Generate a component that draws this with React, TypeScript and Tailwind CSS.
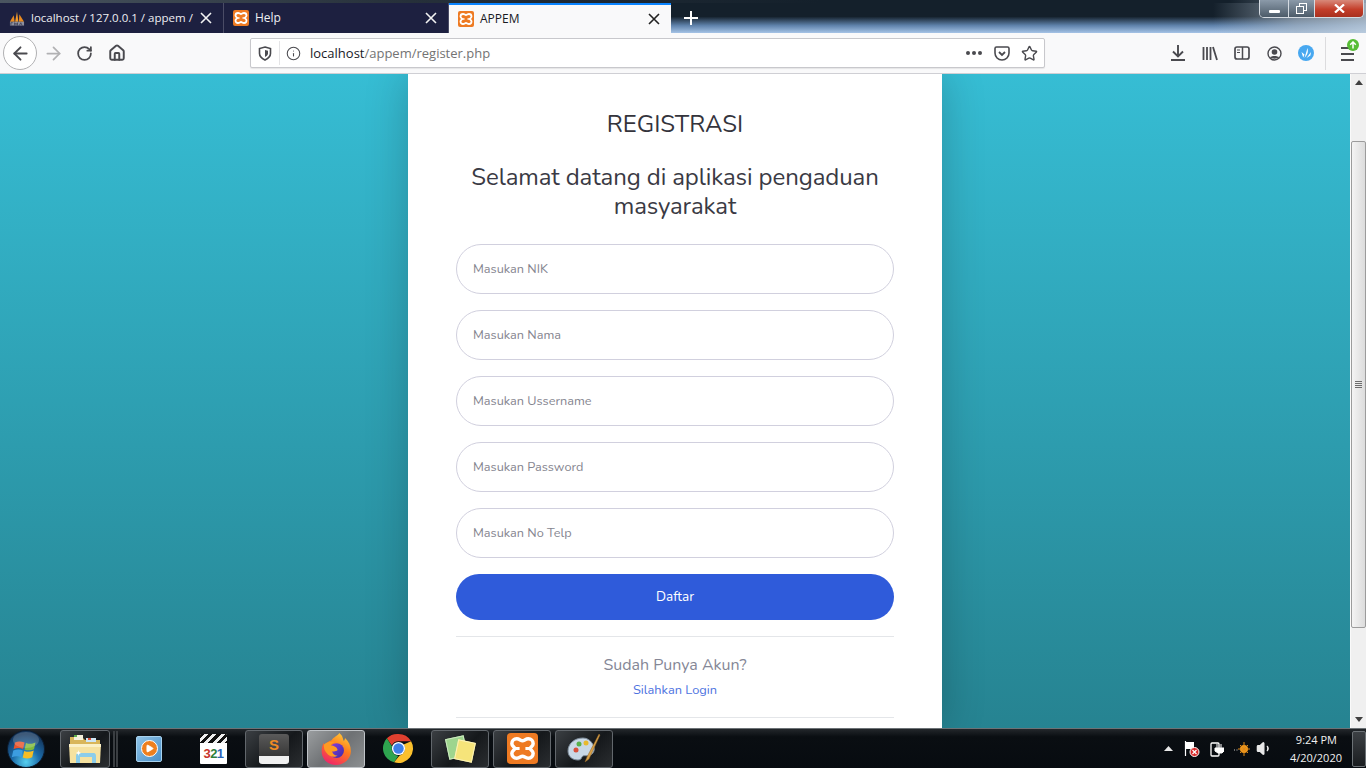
import { ArrowLeft, ArrowRight, RotateCw, Home, Info, Star, Volume1, Play } from 'lucide-react';

const sans = 'font-["Nunito","Open_Sans",sans-serif]';

function XamppIcon({ size = 16 }: { size?: number }) {
  return (
    <svg width={size} height={size} viewBox="0 0 16 16" className="shrink-0">
      <rect x="0" y="0" width="16" height="16" rx="2" fill="#ee7a22" />
      <path
        d="M5 3C6.500 3 7 4 8 4C9 4 9.500 3 11 3C12.500 3 13.500 4 13.500 5.500C13.500 6.800 12 7.200 12 8C12 8.800 13.500 9.200 13.500 10.500C13.500 12 12.500 13 11 13C9.500 13 9 12 8 12C7 12 6.500 13 5 13C3.500 13 2.500 12 2.500 10.500C2.500 9.200 4 8.800 4 8C4 7.200 2.500 6.800 2.500 5.500C2.500 4 3.500 3 5 3z"
        fill="none"
        stroke="#fff"
        strokeWidth="1.800"
      />
      <path d="M4 8h2.500M9.500 8H12" stroke="#fff" strokeWidth="1.600" />
    </svg>
  );
}

function PmaIcon() {
  return (
    <svg width="16" height="17" viewBox="0 0 17 17" className="shrink-0">
      <path d="M1 12 5 5l1 7z" fill="#e98a1f" />
      <path d="M6.500 12 8.500 1l1.500 11z" fill="#f39a2a" />
      <path d="M10.500 12 11 4l5 8z" fill="#e98a1f" />
      <rect x="1" y="12" width="15" height="4" fill="#8d8f9e" />
      <path d="M2 16v-3h2M6 16v-3l1.500 2 1.500-2v3M11 16l1.500-3 1.500 3" fill="none" stroke="#35374f" strokeWidth="0.800" />
    </svg>
  );
}

function Tab({ title, icon, active, width, small }: { title: string; icon: React.ReactNode; active?: boolean; width: string; small?: boolean }) {
  return (
    <div
      className={`${width} h-[30px] shrink-0 flex items-center pl-[9px] pr-[11px] gap-[6px] font-["Open_Sans",sans-serif] ${small ? 'text-[11.500px]' : 'text-[12px]'} ${
        active ? 'bg-[#f9f9fa] text-[#18191f] border-t-2 border-[#0a84ff]' : 'bg-[#1d2040] text-[#eeeef2] border-r border-[#4a4c66]'
      }`}
    >
      {icon}
      <span className="flex-1 whitespace-nowrap">{title}</span>
      <svg width="12" height="12" viewBox="0 0 12 12" className="shrink-0">
        <path d="M1 1l10 10M11 1 1 11" stroke={active ? '#222' : '#f2f2f2'} strokeWidth="1.600" />
      </svg>
    </div>
  );
}

function TitleBar() {
  return (
    <div className="h-[33px] shrink-0 flex flex-col bg-[#14202b]">
      <div className="h-[3px] bg-[linear-gradient(90deg,#4a5560,#26303a_30%,#14202b_60%,#14202b_90%,#8f9fb0)]" />
      <div className="flex h-[30px] items-stretch">
        <Tab title="localhost / 127.0.0.1 / appem /" icon={<PmaIcon />} width="w-[224px]" small />
        <Tab title="Help" icon={<XamppIcon />} width="w-[225px]" />
        <Tab title="APPEM" icon={<XamppIcon />} active width="w-[222px]" />
        <div className="flex-1 flex items-center bg-[linear-gradient(90deg,transparent_78%,rgba(170,185,200,0.65)_90%,rgba(190,205,220,0.8)_100%),linear-gradient(180deg,#14202b_0%,#14202b_45%,#5f82ab_75%,#a5c3e6_100%)] relative">
          <svg width="14" height="14" viewBox="0 0 14 14" className="ml-[13px]">
            <path d="M7 0v14M0 7h14" stroke="#fff" strokeWidth="2" />
          </svg>
          <div className="absolute right-[2px] -top-[3px] flex h-[18px] w-[105px] rounded-b-[5px] border border-t-0 border-[#d5dbe2] overflow-hidden">
            <div className="w-[29px] flex items-end justify-center pb-[4px] border-r border-[#d5dbe2] bg-[linear-gradient(180deg,#8b9aa9,#4c5b69)]">
              <div className="w-[11px] h-[3px] bg-white rounded-[1px]" />
            </div>
            <div className="w-[26px] flex items-center justify-center border-r border-[#d5dbe2] bg-[linear-gradient(180deg,#8b9aa9,#4c5b69)]">
              <svg width="11" height="11" viewBox="0 0 11 11">
                <rect x="3.500" y="0.500" width="7" height="7" fill="none" stroke="#fff" />
                <rect x="0.500" y="3.500" width="7" height="7" fill="#6a7987" stroke="#fff" />
              </svg>
            </div>
            <div className="flex-1 flex items-center justify-center bg-[linear-gradient(180deg,#d8897a,#c43e2a_55%,#a8301f)]">
              <svg width="11" height="9" viewBox="0 0 11 9">
                <path d="M1 .5l9 8M10 .5l-9 8" stroke="#fff" strokeWidth="2.300" />
              </svg>
            </div>
          </div>
        </div>
      </div>
    </div>
  );
}

function ToolBar() {
  const ic = 'text-[#4a4a4f] shrink-0';
  return (
    <div className="h-[41px] shrink-0 bg-[#f9f9fa] border-b border-[#cfcfd4] flex items-center text-[#4a4a4f]">
      <div className="ml-[3px] w-[34px] h-[34px] rounded-full border border-[#b1b1b3] bg-white flex items-center justify-center">
        <ArrowLeft size={21} strokeWidth={2.200} className={ic} />
      </div>
      <ArrowRight size={21} strokeWidth={2} className="ml-[6px] text-[#b1b1b3] shrink-0" />
      <RotateCw size={17} strokeWidth={2.500} className={`ml-[12px] ${ic}`} />
      <Home size={18} strokeWidth={2.600} className={`ml-[15px] ${ic}`} />

      <div className="ml-[124px] w-[795px] h-[30px] bg-white border border-[#c8c8cc] rounded-[2px] flex items-center shadow-[0_1px_1px_rgba(0,0,0,0.08)]">
        <svg width="14" height="15" viewBox="0 0 14 15" className="ml-[7px] shrink-0">
          <path d="M7 1l5.500 1.500v5c0 3-2.500 5-5.500 6.500-3-1.500-5.500-3.500-5.500-6.500v-5z" fill="none" stroke="#4a4a4f" strokeWidth="1.600" />
          <path d="M7 4l3 .8v2.700c0 1.500-1.300 2.700-3 3.500z" fill="#4a4a4f" />
        </svg>
        <div className="ml-[7px] w-px h-[24px] bg-[#e4e4e6]" />
        <Info size={15} strokeWidth={1.700} className={`ml-[6px] ${ic}`} />
        <span className="ml-[9px] pt-[2px] text-[13px] font-['Open_Sans',sans-serif] text-[#18191f] whitespace-nowrap">
          localhost<span className="text-[#737373]">/appem/register.php</span>
        </span>
        <div className="flex-1" />
        <div className="flex gap-[2px] mr-[12px]">
          <div className="w-[4px] h-[4px] rounded-full bg-[#4a4a4f]" />
          <div className="w-[4px] h-[4px] rounded-full bg-[#4a4a4f]" />
          <div className="w-[4px] h-[4px] rounded-full bg-[#4a4a4f]" />
        </div>
        <svg width="16" height="15" viewBox="0 0 16 15" className="mr-[11px] shrink-0">
          <path d="M1 2.500A1.500 1.500 0 0 1 2.500 1h11A1.500 1.500 0 0 1 15 2.500V7a7 7 0 0 1-14 0z" fill="none" stroke="#4a4a4f" strokeWidth="1.600" />
          <path d="M5 6l3 3 3-3" fill="none" stroke="#4a4a4f" strokeWidth="1.800" />
        </svg>
        <Star size={17} strokeWidth={2} className={`mr-[6px] ${ic}`} />
      </div>

      <svg width="16" height="16" viewBox="0 0 16 16" className="ml-[125px] shrink-0">
        <path d="M8 0v11M3 6.500 8 11.500l5-5M1 15h14" fill="none" stroke="#4a4a4f" strokeWidth="1.900" />
      </svg>
      <svg width="16" height="15" viewBox="0 0 16 15" className="ml-[16px] shrink-0">
        <path d="M1.500 1v13M5 1v13M8.500 1v13M11 1l4 13" stroke="#4a4a4f" strokeWidth="1.800" fill="none" />
      </svg>
      <svg width="16" height="14" viewBox="0 0 16 14" className="ml-[16px] shrink-0">
        <rect x="1" y="1" width="14" height="12" rx="2" fill="none" stroke="#4a4a4f" strokeWidth="1.700" />
        <path d="M8.500 1v12" stroke="#4a4a4f" strokeWidth="1.500" />
        <path d="M3 4h3M3 6.500h3" stroke="#4a4a4f" strokeWidth="1.200" />
      </svg>
      <svg width="15" height="15" viewBox="0 0 15 15" className="ml-[17px] shrink-0">
        <circle cx="7.500" cy="7.500" r="6.500" fill="none" stroke="#4a4a4f" strokeWidth="1.400" />
        <circle cx="7.500" cy="6" r="2.800" fill="#4a4a4f" />
        <path d="M3 11.500c1-2 8-2 9 0-1.500 1.500-7.500 1.500-9 0z" fill="#4a4a4f" />
      </svg>
      <svg width="16" height="16" viewBox="0 0 16 16" className="ml-[16px] shrink-0">
        <circle cx="8" cy="8" r="8" fill="#48a8f0" />
        <path d="M6.500 13 9.500 3c.8 3.500.6 6-3 10zM5.200 12.500 3.500 7 6.500 9.500zM8.500 13l4.500-6-.6 3.500z" fill="#fff" />
      </svg>
      <div className="ml-[11px] w-px h-[33px] bg-[#dcdcde]" />
      <div className="ml-[15px] relative w-[13px] h-[14px] flex flex-col justify-between shrink-0 mt-[2px]">
        <div className="h-[2px] w-[9px] bg-[#4a4a4f]" />
        <div className="h-[2px] bg-[#4a4a4f]" />
        <div className="h-[2px] bg-[#4a4a4f]" />
        <div className="absolute -top-[8px] left-[6px] w-[12px] h-[12px] rounded-full bg-[#57bd35] flex items-center justify-center">
          <svg width="8" height="8" viewBox="0 0 8 8">
            <path d="M4 7.500V1M1.200 3.800 4 1l2.800 2.800" fill="none" stroke="#fff" strokeWidth="1.500" />
          </svg>
        </div>
      </div>
    </div>
  );
}

function Field({ placeholder }: { placeholder: string }) {
  return (
    <div className="h-[50px] rounded-[25px] border border-[#d1d0de] bg-white flex items-center pl-4 text-[12.700px] text-[#85858f]">
      {placeholder}
    </div>
  );
}

function Card() {
  return (
    <div className={`w-[534px] h-full bg-white shadow-[0_0_40px_rgba(0,0,0,0.22)] px-12 flex flex-col text-center ${sans}`}>
      <h1 className="mt-[33px] h-[34px] leading-[34px] text-[24px] text-[#34343c]">REGISTRASI</h1>
      <h2 className="mt-[22px] text-[24px] leading-[29px] text-[#3a3a44] tracking-[-0.100px]">
        Selamat datang di aplikasi pengaduan masyarakat
      </h2>
      <div className="mt-[23px] flex flex-col gap-4 text-left">
        <Field placeholder="Masukan NIK" />
        <Field placeholder="Masukan Nama" />
        <Field placeholder="Masukan Ussername" />
        <Field placeholder="Masukan Password" />
        <Field placeholder="Masukan No Telp" />
      </div>
      <button className="mt-4 h-[46px] shrink-0 rounded-[23px] bg-[#2f5bda] text-white text-[13.500px]">Daftar</button>
      <div className="mt-4 h-px bg-[#e4e6e9]" />
      <p className="mt-[17px] text-[16px] leading-[22px] text-[#858796]">Sudah Punya Akun?</p>
      <a className="mt-[4px] text-[12.800px] leading-[20px] text-[#4e73df]">Silahkan Login</a>
      <div className="mt-[17px] h-px bg-[#e4e6e9]" />
    </div>
  );
}

function Scrollbar() {
  return (
    <div className="w-[16px] shrink-0 bg-[#f0f0f0] border-l border-[#fafafa] flex flex-col">
      <div className="h-[67px] shrink-0 flex justify-center pt-[6px]">
        <svg width="8" height="5" viewBox="0 0 8 5">
          <path d="M0 5 4 0l4 5z" fill="#404040" />
        </svg>
      </div>
      <div className="h-[487px] shrink-0 bg-[linear-gradient(90deg,#f4f4f4,#dcdcdc)] border border-[#9c9c9c] rounded-[2px] flex flex-col gap-[1px] items-center justify-center">
        <div className="w-[7px] h-px bg-[#6c6c6c]" />
        <div className="w-[7px] h-px bg-[#6c6c6c]" />
        <div className="w-[7px] h-px bg-[#6c6c6c]" />
        <div className="w-[7px] h-px bg-[#6c6c6c]" />
      </div>
      <div className="flex-1 flex justify-center items-end pb-[6px]">
        <svg width="8" height="5" viewBox="0 0 8 5">
          <path d="M0 0 4 5l4-5z" fill="#404040" />
        </svg>
      </div>
    </div>
  );
}

function WinOrb() {
  return (
    <svg width="38" height="38" viewBox="0 0 38 38">
      <defs>
        <radialGradient id="orb" cx="50%" cy="85%" r="75%">
          <stop offset="0%" stopColor="#56d0f0" />
          <stop offset="50%" stopColor="#1b6aa8" />
          <stop offset="100%" stopColor="#14365c" />
        </radialGradient>
      </defs>
      <circle cx="19" cy="19" r="18.500" fill="url(#orb)" stroke="#0c1c30" />
      <path d="M8 12.500c3-1.500 6-1.500 9.500 0l-1.400 6.500c-3-1.200-6-1.200-9.500 0z" fill="#e8552d" />
      <path d="M19 13c3 1.200 6 1.200 9.500-.5l-1.500 6.700c-3.500 1.500-6.500 1.500-9.500.3z" fill="#7fba3c" />
      <path d="M6.300 20.500c3.500-1.200 6.500-1.200 9.500 0l-1.500 6.700c-3-1.400-6-1.400-9.500 0z" fill="#3c9de0" />
      <path d="M17.200 21c3 1.200 6 1.200 9.500-.4l-1.500 6.700c-3.500 1.500-6.500 1.500-9.500.3z" fill="#f6bd24" />
      <ellipse cx="19" cy="10" rx="13" ry="8" fill="#fff" opacity="0.18" />
    </svg>
  );
}

function Explorer() {
  return (
    <svg width="34" height="32" viewBox="0 0 34 32">
      <path d="M2 4h12l3 3h15v6H2z" fill="#d9b65a" />
      <rect x="6" y="2" width="9" height="5" fill="#f4f0dc" />
      <rect x="6" y="2" width="3" height="2" fill="#5fb04a" />
      <rect x="18" y="5" width="10" height="4" fill="#cfe6f5" />
      <rect x="20" y="5" width="3" height="2" fill="#d8503a" />
      <path d="M1 11h32l-1 19H2z" fill="#f6e2a0" />
      <path d="M1 11h32v3H1z" fill="#fbf1c8" />
      <path d="M8 30v-7c0-2 1-3 3-3h15c1 0 2 1 2 3v7h-4v-6H12v6z" fill="#8ccdea" />
      <path d="M8 20l2-1 .5-2 .5 2 2 1-2 1-.5 2-.5-2z" fill="#fff" />
    </svg>
  );
}

function Firefox() {
  return (
    <svg width="34" height="34" viewBox="0 0 32 32">
      <defs>
        <linearGradient id="ff" x1="0.8" y1="0" x2="0.3" y2="1">
          <stop offset="0%" stopColor="#ffcf3a" />
          <stop offset="45%" stopColor="#ff7a1c" />
          <stop offset="100%" stopColor="#f0246a" />
        </linearGradient>
        <linearGradient id="ffc" x1="0" y1="0" x2="1" y2="1">
          <stop offset="0%" stopColor="#8a3fe0" />
          <stop offset="100%" stopColor="#3b2ba8" />
        </linearGradient>
      </defs>
      <path d="M16 31C8 31 2.500 25 2.500 18c0-3 .6-5.500 2-8 .2 1.300.6 2.200 1.300 2.800C7 10 9 8.500 11.500 8 14 4.500 18 3.500 19 1c4 3 3 5.500 4.500 7.500.6-1 .8-1.800 1-2.800 3.500 3 5.500 7.500 5.500 12.300 0 7-6.500 13-14 13z" fill="url(#ff)" />
      <circle cx="16.500" cy="17.500" r="7" fill="url(#ffc)" />
      <path d="M4.500 12c3-3 8-3.500 11-2.500-2 .5-3.500 1.500-4.500 3 3 .5 6 1.500 6.500 4.500-1.500 1.500-4 1.500-5 1 0 2 2 4 5 4-3 2.500-8 1-10.500-2.500C5 17.500 4.500 15 4.500 12z" fill="#ff9a22" />
    </svg>
  );
}

function Chrome() {
  return (
    <svg width="31" height="31" viewBox="0 0 32 32">
      <path d="M16 1a15 15 0 0 1 13 7.500H16a7.500 7.500 0 0 0-6.900 4.500L4 5.500A15 15 0 0 1 16 1z" fill="#e0402f" />
      <path d="M4 5.500 9.300 14a7.500 7.500 0 0 0 6.500 9.500L11.500 30.300A15 15 0 0 1 4 5.500z" fill="#2ea44f" />
      <path d="M29 8.500A15 15 0 0 1 11.500 30.300L16.800 23.400a7.500 7.500 0 0 0 4.500-11.500z" fill="#fbc02d" />
      <circle cx="16" cy="16" r="6.800" fill="#fff" />
      <circle cx="16" cy="16" r="5.400" fill="#3f7fe8" />
    </svg>
  );
}

function TaskButton({ active, className, children }: { active?: boolean; className?: string; children: React.ReactNode }) {
  return (
    <div
      className={`w-[58px] h-[38px] shrink-0 rounded-[3px] border flex items-center justify-center ${
        active
          ? 'border-[#c0c4c8] bg-[linear-gradient(135deg,#9a9d9f,#6e7174_50%,#8c8f91)]'
          : 'border-[#62676c] bg-[linear-gradient(135deg,#3b3f43,#15181b_55%,#2a2d30)]'
      } ${className ?? ''}`}
    >
      {children}
    </div>
  );
}

function TaskBar() {
  return (
    <div className="h-[40px] shrink-0 bg-[linear-gradient(180deg,#23272b,#0a0e12_20%,#070b10)] border-t border-[#6c7276] flex items-center text-white">
      <div className="ml-[7px] shrink-0 flex">
        <WinOrb />
      </div>
      <TaskButton className="ml-[15px] !w-[50px]">
        <Explorer />
      </TaskButton>
      <div className="ml-[3px] w-[2px] h-[36px] bg-[#3a3e42]" />
      <div className="ml-[1px] w-[2px] h-[36px] bg-[#3a3e42]" />
      <div className="ml-[18px] relative w-[26px] h-[26px] shrink-0 rounded-[2px] bg-[linear-gradient(135deg,#8ec3e6,#4a8fc8)] border border-[#a8d2ee] flex items-center justify-center">
        <div className="w-[17px] h-[17px] rounded-full bg-[#ee7f1e] border border-white flex items-center justify-center">
          <Play size={9} fill="#fff" stroke="#fff" />
        </div>
      </div>
      <div className="ml-[38px] w-[27px] h-[30px] shrink-0 bg-white rounded-[1px] flex flex-col overflow-hidden">
        <div className="h-[9px] bg-[repeating-linear-gradient(135deg,#111_0_3px,#eee_3px_6px)]" />
        <div className="flex-1 flex items-center justify-center font-['Liberation_Sans',sans-serif] font-bold text-[13px] tracking-[-0.500px] leading-none">
          <span className="text-[#c8342a]">3</span>
          <span className="text-[#2f7f3a]">2</span>
          <span className="text-[#2a63b8]">1</span>
        </div>
      </div>
      <TaskButton className="ml-[18px]">
        <div className="w-[30px] h-[30px] rounded-[3px] bg-[linear-gradient(180deg,#5a5a5a,#383838_72%,#f0f0f0_73%)] flex items-start justify-center">
          <span className="text-[#f08a24] text-[15px] font-bold leading-[22px] font-['Liberation_Sans',sans-serif]">S</span>
        </div>
      </TaskButton>
      <TaskButton active className="ml-[4px]">
        <Firefox />
      </TaskButton>
      <div className="ml-[18px] shrink-0 flex">
        <Chrome />
      </div>
      <TaskButton className="ml-[17px]">
        <div className="relative w-[30px] h-[28px]">
          <div className="absolute left-[2px] top-[2px] w-[19px] h-[21px] -rotate-12 bg-[#9ed58e] border border-[#cce8c0]" />
          <div className="absolute left-[11px] top-[6px] w-[18px] h-[20px] rotate-12 bg-[#f6e47a] border border-[#fbf2b8]" />
        </div>
      </TaskButton>
      <TaskButton className="ml-[4px]">
        <XamppIcon size={31} />
      </TaskButton>
      <TaskButton className="ml-[4px]">
        <svg width="34" height="32" viewBox="0 0 34 32">
          <path d="M16 5C7 5 1 11 1 18c0 6 5 9 10 9 4 0 3-3 5-4s6 1 9-2c3-3 3-7 0-11-2-3-5-5-9-5z" fill="#c9d8e6" stroke="#7d8b99" />
          <circle cx="9" cy="17" r="2.500" fill="#d8503a" />
          <circle cx="12" cy="11" r="2.500" fill="#57b04a" />
          <circle cx="19" cy="10" r="2.500" fill="#e8b92e" />
          <path d="M32 1 20 24l-2 5 4-3L33 2z" fill="#d8a14a" stroke="#8a5e22" strokeWidth="0.500" />
        </svg>
      </TaskButton>
      <div className="flex-1" />
      <svg width="9" height="5" viewBox="0 0 9 5" className="mr-[11px] shrink-0">
        <path d="M0 5 4.500 0 9 5z" fill="#e8e8e8" />
      </svg>
      <svg width="16" height="16" viewBox="0 0 16 16" className="mr-[10px] shrink-0">
        <path d="M1.500 0v15" stroke="#fff" strokeWidth="1.200" />
        <path d="M2 1h8v7H2z" fill="#fff" />
        <circle cx="10.500" cy="11" r="4.500" fill="#d92a2a" stroke="#fff" />
        <path d="M8.500 9l4 4M12.500 9l-4 4" stroke="#fff" strokeWidth="1.200" />
      </svg>
      <svg width="14" height="16" viewBox="0 0 14 16" className="mr-[10px] shrink-0">
        <rect x="1" y="2" width="8" height="13" rx="1" fill="none" stroke="#fff" strokeWidth="1.300" />
        <path d="M5 7h9v3l-2 2h-4l-3-2zM7 3v4M11 3v4" fill="#fff" stroke="#fff" />
      </svg>
      <svg width="17" height="14" viewBox="0 0 17 14" className="mr-[5px] shrink-0">
        <circle cx="10" cy="7" r="4" fill="#f29a1c" />
        <path d="M10 0v14M4 7h12M6 3l8 8M14 3l-8 8" stroke="#e08a18" strokeWidth="1" />
        <path d="M0 8h1M2.500 8h1" stroke="#8a8a8a" strokeWidth="1.500" />
      </svg>
      <Volume1 size={17} fill="#e8e8e8" className="text-[#e8e8e8] mr-[17px] shrink-0" />
      <div className="w-[52px] shrink-0 flex flex-col items-end text-[11px] leading-[18px] font-['Open_Sans',sans-serif] text-[#f0f0f0] mr-[10px] whitespace-nowrap">
        <span className="pr-[5px]">9:24 PM</span>
        <span>4/20/2020</span>
      </div>
      <div className="w-[14px] h-[36px] shrink-0 rounded-[2px] border border-[#6c7276] bg-[linear-gradient(180deg,#3c4044,#1a1d20)]" />
    </div>
  );
}

export default function App() {
  return (
    <div className="w-[1366px] h-[768px] overflow-hidden flex flex-col">
      <TitleBar />
      <ToolBar />
      <div className="h-[654px] shrink-0 flex">
        <div className="flex-1 bg-[linear-gradient(180deg,#36bdd4,#268391)] flex justify-center overflow-hidden">
          <Card />
        </div>
        <Scrollbar />
      </div>
      <TaskBar />
    </div>
  );
}
